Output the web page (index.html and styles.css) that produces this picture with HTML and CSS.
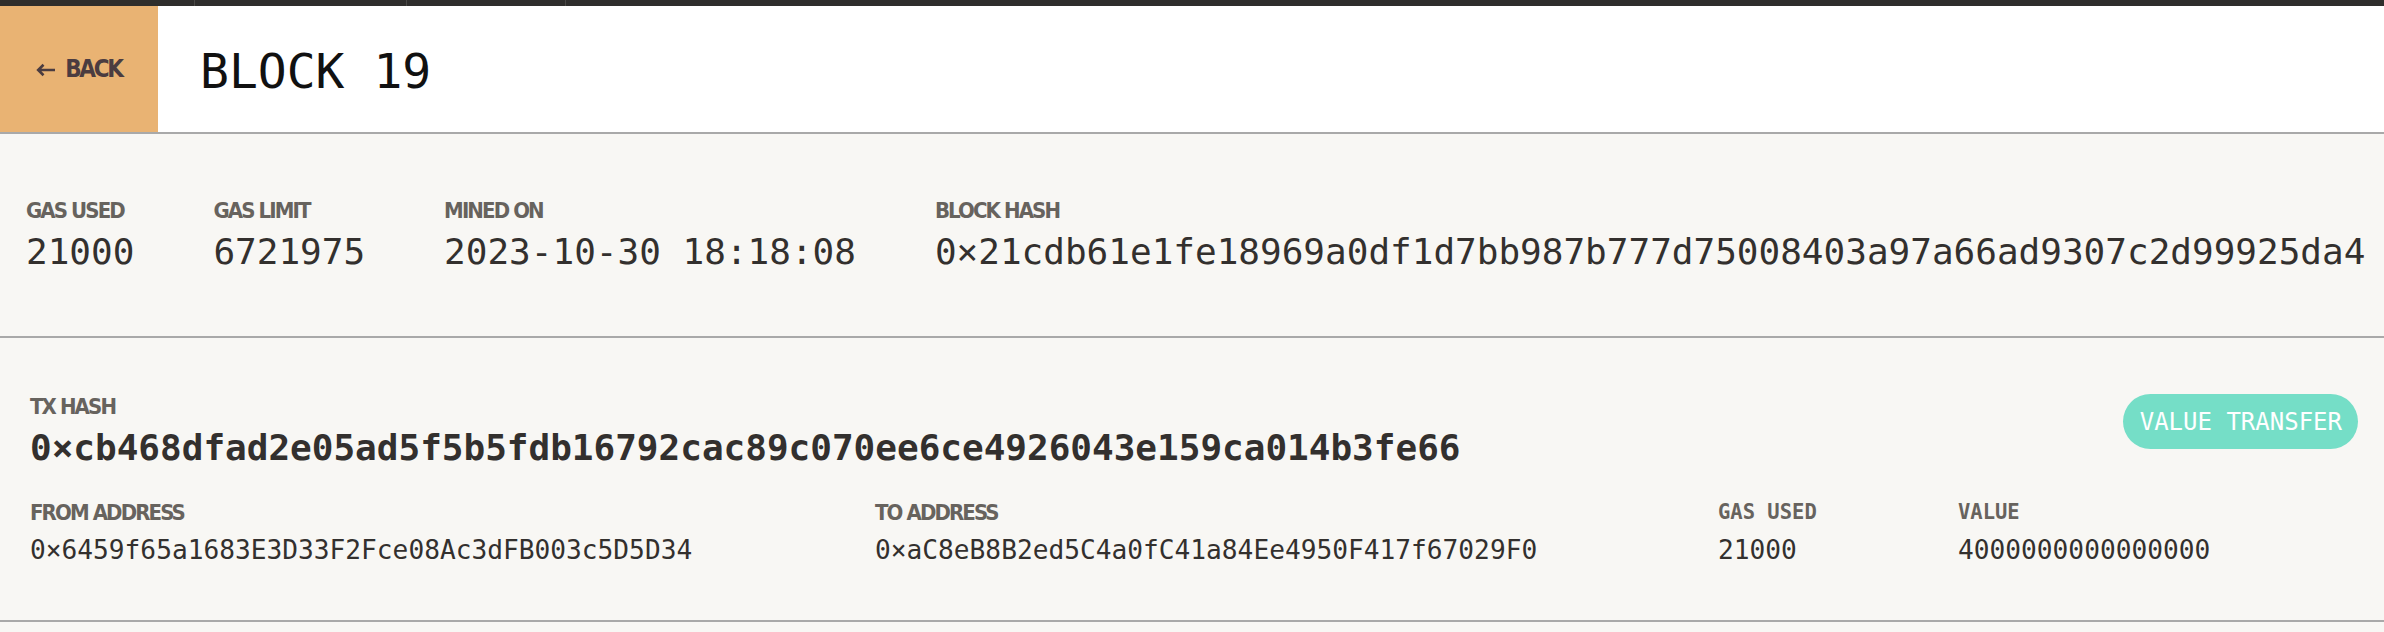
FILE: index.html
```html
<!DOCTYPE html>
<html lang="en">
<head>
<meta charset="utf-8">
<title>Block 19</title>
<link rel="stylesheet" href="styles.css">
</head>
<body>
<div class="topbar">
  <span class="tab tab-a"></span>
  <span class="tab tab-b"></span>
  <span class="tab tab-c"></span>
</div>
<header class="header">
  <a class="back" href="#">
    <svg class="back-arrow" width="20" height="14" viewBox="0 0 20 14" aria-hidden="true">
      <path d="M19 7H2.5M7.5 1.8L2.2 7l5.3 5.2" fill="none" stroke="currentColor" stroke-width="2.6" stroke-linecap="butt" stroke-linejoin="miter"/>
    </svg>
    <span>BACK</span>
  </a>
  <h1 class="title">BLOCK 19</h1>
</header>
<section class="stats">
  <div class="stat">
    <div class="label">GAS USED</div>
    <div class="value">21000</div>
  </div>
  <div class="stat">
    <div class="label">GAS LIMIT</div>
    <div class="value">6721975</div>
  </div>
  <div class="stat">
    <div class="label">MINED ON</div>
    <div class="value">2023-10-30 18:18:08</div>
  </div>
  <div class="stat">
    <div class="label">BLOCK HASH</div>
    <div class="value">0×21cdb61e1fe18969a0df1d7bb987b777d75008403a97a66ad9307c2d99925da4</div>
  </div>
</section>
<section class="tx">
  <div class="tx-top">
    <div class="tx-hash-col">
      <div class="label">TX HASH</div>
      <div class="tx-hash">0×cb468dfad2e05ad5f5b5fdb16792cac89c070ee6ce4926043e159ca014b3fe66</div>
    </div>
    <div class="badge">VALUE TRANSFER</div>
  </div>
  <div class="tx-details">
    <div class="detail">
      <div class="label">FROM ADDRESS</div>
      <div class="detail-value">0×6459f65a1683E3D33F2Fce08Ac3dFB003c5D5D34</div>
    </div>
    <div class="detail">
      <div class="label">TO ADDRESS</div>
      <div class="detail-value">0×aC8eB8B2ed5C4a0fC41a84Ee4950F417f67029F0</div>
    </div>
    <div class="detail">
      <div class="label label-mono">GAS USED</div>
      <div class="detail-value">21000</div>
    </div>
    <div class="detail">
      <div class="label label-mono">VALUE</div>
      <div class="detail-value">4000000000000000</div>
    </div>
  </div>
</section>
</body>
</html>
```

FILE: styles.css
```css
* {
  box-sizing: border-box;
}

html, body {
  margin: 0;
  padding: 0;
}

body {
  background: #f8f7f4;
  color: #33302e;
  font-family: "DejaVu Sans Mono", monospace;
  overflow: hidden;
}

.topbar {
  height: 6px;
  background: #2f2e2c;
  display: flex;
}

.tab {
  height: 6px;
  border-right: 1px solid #4a4946;
}

.tab-a { width: 195px; }
.tab-b { width: 212px; }
.tab-c { width: 159px; }

.header {
  height: 128px;
  background: #ffffff;
  border-bottom: 2px solid #a9a9a9;
  display: flex;
  align-items: stretch;
}

.back {
  width: 158px;
  background: #e9b373;
  color: #4b3c40;
  text-decoration: none;
  display: flex;
  align-items: center;
  justify-content: center;
  gap: 9px;
  padding-left: 2px;
  padding-right: 2px;
  font-family: "DejaVu Sans Condensed", sans-serif;
  font-weight: 700;
  font-size: 24px;
  letter-spacing: -2.3px;
  line-height: 1;
}

.back-arrow {
  display: block;
  margin-top: 1px;
}

.title {
  margin: 0 0 0 42px;
  align-self: center;
  font-family: "DejaVu Sans Mono", monospace;
  font-weight: 400;
  font-size: 48px;
  line-height: 48px;
  color: #111111;
  padding-top: 3px;
}

.stats {
  display: flex;
  gap: 79px;
  padding: 65px 0 66px 26px;
  border-bottom: 2px solid #a9a9a9;
}

.stat {
  display: flex;
  flex-direction: column;
  gap: 12px;
  flex-shrink: 0;
}

.label {
  font-family: "DejaVu Sans Condensed", sans-serif;
  font-weight: 700;
  font-size: 22px;
  line-height: 23px;
  letter-spacing: -1.9px;
  color: #67635e;
  white-space: nowrap;
}

.label-mono {
  font-family: "DejaVu Sans Mono", monospace;
  font-size: 20.5px;
  letter-spacing: 0;
}

.value {
  font-family: "DejaVu Sans Mono", monospace;
  font-size: 36px;
  line-height: 36px;
  color: #33302e;
  white-space: nowrap;
}

.tx {
  padding: 57px 26px 57px 30px;
  border-bottom: 2px solid #a9a9a9;
}

.tx-top {
  display: flex;
  justify-content: space-between;
  align-items: flex-start;
}

.tx-hash-col {
  display: flex;
  flex-direction: column;
  gap: 12px;
}

.tx-hash {
  font-family: "DejaVu Sans Mono", monospace;
  font-weight: 700;
  font-size: 36px;
  line-height: 36px;
  color: #33302e;
  white-space: nowrap;
}

.badge {
  height: 55px;
  margin-top: -1px;
  padding: 0 16px 0 17px;
  border-radius: 28px;
  background: #75dec7;
  color: #ffffff;
  font-family: "DejaVu Sans Mono", monospace;
  font-size: 24px;
  display: flex;
  align-items: center;
  white-space: nowrap;
}

.tx-details {
  margin-top: 35px;
  display: grid;
  grid-template-columns: 845px 843px 240px 1fr;
}

.detail {
  display: flex;
  flex-direction: column;
  gap: 12.5px;
}

.detail-value {
  font-family: "DejaVu Sans Mono", monospace;
  font-size: 26.2px;
  line-height: 26px;
  color: #33302e;
  white-space: nowrap;
}
```
